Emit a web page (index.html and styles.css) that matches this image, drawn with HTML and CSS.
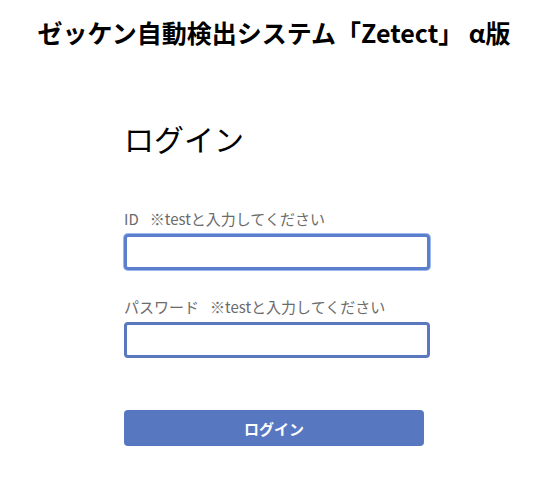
FILE: index.html
```html
<!doctype html>
<html lang="ja">
<head>
	<meta charset="UTF-8">
	<title>Zetect</title>
	<link rel="stylesheet" href="styles.css">
</head>
<body>
	<h1 class="title">ゼッケン自動検出システム「Zetect」 α版</h1>
	<div class="login">
		<h2 class="login-title">ログイン</h2>
		<form class="login-form">
			<label class="label" for="id">ID<span class="note">※testと入力してください</span></label>
			<input class="field field-focus" type="text" id="id">
			<label class="label" for="pw">パスワード<span class="note">※testと入力してください</span></label>
			<input class="field" type="password" id="pw">
			<button class="btn" type="button">ログイン</button>
		</form>
	</div>
</body>
</html>
```

FILE: styles.css
```css
body {
	margin: 0;
	font-family: "Noto Sans CJK JP", "Noto Sans", sans-serif;
	background: #fff;
}
.title {
	margin: 0;
	padding-top: 14px;
	text-align: center;
	font-size: 25px;
	line-height: 36px;
	font-weight: bold;
	color: #000;
}
.login {
	width: 300px;
	margin: 0 auto;
	padding-top: 68px;
}
.login-title {
	margin: 0;
	font-size: 30px;
	line-height: 40px;
	font-weight: normal;
	color: #000;
}
.login-form {
	padding-top: 51px;
}
.label {
	display: block;
	font-size: 15px;
	line-height: 20px;
	color: #6b6b6b;
	margin-bottom: 5px;
}
.note {
	margin-left: 11px;
}
.field {
	display: block;
	width: 100%;
	height: 30px;
	padding: 0;
	border: 3px solid #5a78be;
	border-radius: 4px;
	margin-bottom: 27px;
	outline: none;
}
.field-focus {
	border-color: #5b7fcc;
	box-shadow: 0 0 0 1px #9cb8ee;
}
.btn {
	display: block;
	width: 300px;
	height: 36px;
	margin-top: 52px;
	border: none;
	border-radius: 4px;
	background-color: #5778c0;
	color: #fff;
	font-family: "Noto Sans CJK JP", sans-serif;
	font-size: 15px;
	font-weight: bold;
}
```
